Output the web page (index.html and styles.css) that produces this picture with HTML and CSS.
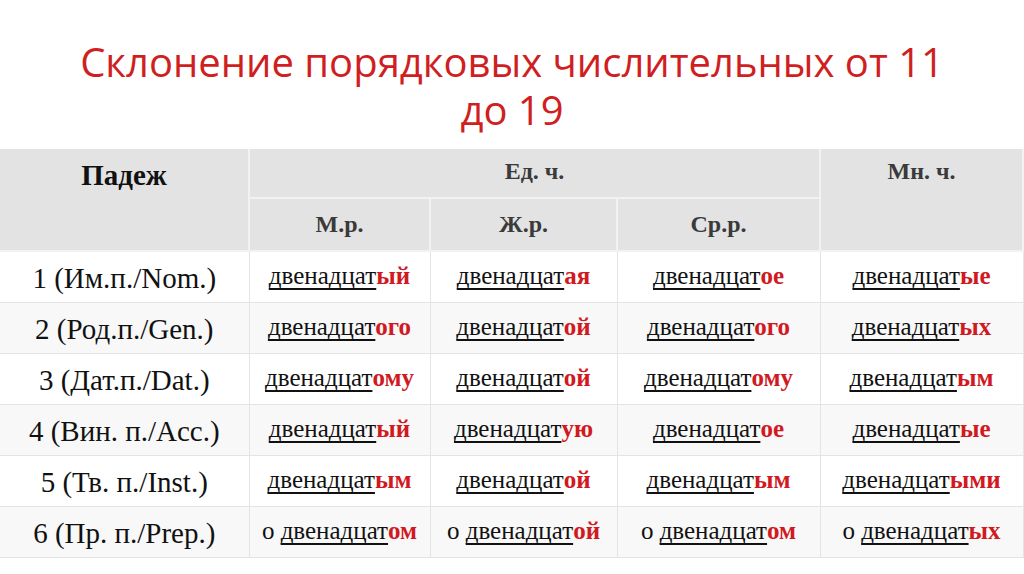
FILE: index.html
```html
<!DOCTYPE html>
<html lang="ru">
<head>
<meta charset="utf-8">
<link rel="stylesheet" href="styles.css">
</head>
<body>
<h1 class="title"><span class="tl">Склонение порядковых числительных от 11</span><span class="tl">до 19</span></h1>
<table class="grid">
  <colgroup>
    <col class="c0"><col class="c1"><col class="c2"><col class="c3"><col class="c4">
  </colgroup>
  <thead>
    <tr class="h1">
      <th rowspan="2" class="case-h">Падеж</th>
      <th colspan="3" class="sg">Ед. ч.</th>
      <th rowspan="2" class="top">Мн. ч.</th>
    </tr>
    <tr class="h2">
      <th>М.р.</th><th>Ж.р.</th><th>Ср.р.</th>
    </tr>
  </thead>
  <tbody>
    <tr>
      <td class="case">1 (Им.п./Nom.)</td>
      <td><u>двенадцат</u><b>ый</b></td>
      <td><u>двенадцат</u><b>ая</b></td>
      <td><u>двенадцат</u><b>ое</b></td>
      <td><u>двенадцат</u><b>ые</b></td>
    </tr>
    <tr class="alt">
      <td class="case">2 (Род.п./Gen.)</td>
      <td><u>двенадцат</u><b>ого</b></td>
      <td><u>двенадцат</u><b>ой</b></td>
      <td><u>двенадцат</u><b>ого</b></td>
      <td><u>двенадцат</u><b>ых</b></td>
    </tr>
    <tr>
      <td class="case">3 (Дат.п./Dat.)</td>
      <td><u>двенадцат</u><b>ому</b></td>
      <td><u>двенадцат</u><b>ой</b></td>
      <td><u>двенадцат</u><b>ому</b></td>
      <td><u>двенадцат</u><b>ым</b></td>
    </tr>
    <tr class="alt">
      <td class="case">4 (Вин. п./Acc.)</td>
      <td><u>двенадцат</u><b>ый</b></td>
      <td><u>двенадцат</u><b>ую</b></td>
      <td><u>двенадцат</u><b>ое</b></td>
      <td><u>двенадцат</u><b>ые</b></td>
    </tr>
    <tr>
      <td class="case">5 (Тв. п./Inst.)</td>
      <td><u>двенадцат</u><b>ым</b></td>
      <td><u>двенадцат</u><b>ой</b></td>
      <td><u>двенадцат</u><b>ым</b></td>
      <td><u>двенадцат</u><b>ыми</b></td>
    </tr>
    <tr class="alt">
      <td class="case">6 (Пр. п./Prep.)</td>
      <td>о <u>двенадцат</u><b>ом</b></td>
      <td>о <u>двенадцат</u><b>ой</b></td>
      <td>о <u>двенадцат</u><b>ом</b></td>
      <td>о <u>двенадцат</u><b>ых</b></td>
    </tr>
  </tbody>
</table>
</body>
</html>
```
FILE: styles.css
```css
html, body {
  margin: 0;
  padding: 0;
  background: #ffffff;
}
body {
  width: 1024px;
  height: 574px;
  overflow: hidden;
}
.title {
  margin: 0;
  padding-top: 38px;
  height: 149px;
  box-sizing: border-box;
  font-family: "Open Sans", "Liberation Sans", sans-serif;
  font-weight: 400;
  font-size: 40px;
  color: #d01f22;
  text-align: center;
  display: flex;
  flex-direction: column;
  align-items: center;
}
.tl {
  display: block;
  height: 48px;
  line-height: 48px;
}
.grid {
  border-collapse: collapse;
  width: 1023px;
  table-layout: fixed;
}
.grid th,
.grid td,
.grid u,
.grid b {
  font-family: "Liberation Serif", "DejaVu Serif", serif;
}
.c0 { width: 249px; }
.c1 { width: 181px; }
.c2 { width: 187px; }
.c3 { width: 203px; }
.c4 { width: 203px; }
.grid th {
  background: #e3e3e3;
  border: 2px solid #f2f2f2;
  color: #3a3a3a;
  font-size: 24px;
  font-weight: 700;
  text-align: center;
  padding: 0;
  line-height: 28px;
}
.grid thead tr:first-child th { border-top: none; }
.grid th:first-child { border-left: none; }
.h1 th { height: 44px; }
.grid th.sg { padding-bottom: 4px; }
.h2 th { height: 49px; vertical-align: middle; padding-bottom: 2px; }
.grid th.case-h {
  color: #111;
  font-size: 29px;
  line-height: 34px;
  vertical-align: top;
  padding-top: 9px;
}
.grid th.top {
  vertical-align: top;
  padding-top: 8px;
}
.grid td {
  height: 47px;
  border: 1px solid #e4e4e4;
  text-align: center;
  font-size: 25px;
  line-height: 30px;
  color: #111;
  padding: 0 0 3px;
  background: #ffffff;
}
.grid td:first-child { border-left: none; }
.grid tr.alt td { background: #f8f8f8; }
.grid td.case {
  font-size: 29px;
  color: #111;
  padding: 2px 0 1px;
}
.grid td u {
  text-decoration: underline;
  text-decoration-thickness: 1.5px;
  text-underline-offset: 4px;
  text-decoration-skip-ink: none;
}
.grid td b {
  color: #d01a1f;
  font-weight: 700;
}
```
